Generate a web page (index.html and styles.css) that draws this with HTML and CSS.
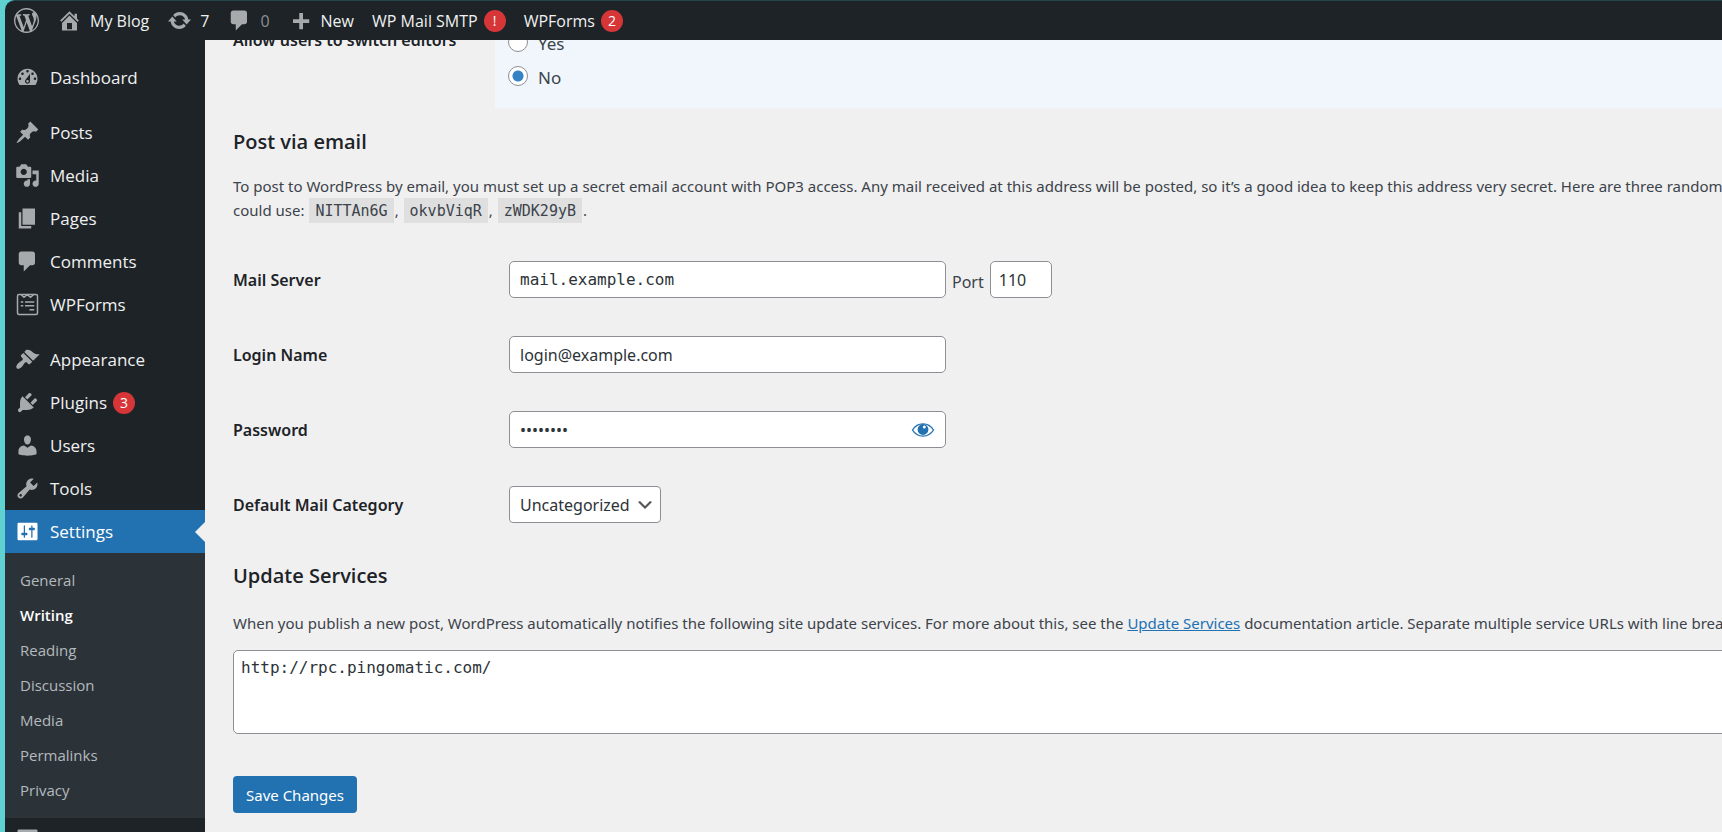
FILE: index.html
```html
<!DOCTYPE html>
<html lang="en">
<head>
<meta charset="utf-8">
<meta name="viewport" content="width=device-width, initial-scale=1">
<title>Writing Settings ‹ My Blog — WordPress</title>
<link rel="stylesheet" href="styles.css">
</head>
<body>
<div class="window">
  <header class="adminbar">
    <a class="bar-item bar-logo" href="#" aria-label="About WordPress"><svg class="icon" viewBox="0 0 20 20"><path d="M20 10c0-5.51-4.49-10-10-10C4.48 0 0 4.49 0 10c0 5.52 4.48 10 10 10 5.51 0 10-4.48 10-10zM7.78 15.37L4.37 6.22c.55-.02 1.17-.08 1.17-.08.5-.06.44-1.13-.06-1.11 0 0-1.45.11-2.37.11-.18 0-.37 0-.58-.01C4.12 2.69 6.87 1.11 10 1.11c2.33 0 4.45.87 6.05 2.34-.68-.11-1.65.39-1.65 1.58 0 .74.45 1.36.9 2.1.35.61.55 1.36.55 2.46 0 1.49-1.4 5-1.4 5l-3.03-8.37c.54-.02.82-.17.82-.17.5-.05.44-1.25-.06-1.22 0 0-1.44.12-2.38.12-.87 0-2.33-.12-2.33-.12-.5-.03-.56 1.2-.06 1.22l.92.08 1.26 3.41zM17.41 10c.24-.64.74-1.87.43-4.25.7 1.29 1.05 2.71 1.05 4.25 0 3.29-1.73 6.24-4.4 7.78.97-2.59 1.94-5.2 2.92-7.78zM6.1 18.09C3.12 16.65 1.11 13.53 1.11 10c0-1.3.23-2.48.72-3.59C3.25 10.3 4.67 14.2 6.1 18.09zm4.03-6.63l2.58 6.98c-.86.29-1.76.45-2.71.45-.79 0-1.57-.11-2.29-.33.81-2.38 1.62-4.74 2.42-7.1z"/></svg></a>
    <a class="bar-item" href="#"><svg class="icon" viewBox="0 0 20 20"><path d="M16 8.5l1.53 1.53-1.06 1.06L10 4.6l-6.47 6.49-1.06-1.06L10 2.5l4 4v-2h2v4zm-6-2.46l6 5.99V18H4v-5.97zM12 17v-5H8v5h4z"/></svg>My Blog</a>
    <a class="bar-item" href="#"><svg class="icon" viewBox="0 0 20 20"><path d="M10.2 3.28c3.53 0 6.43 2.61 6.92 6h2.08l-3.5 4-3.5-4h2.32c-.45-1.97-2.21-3.45-4.32-3.45-1.45 0-2.73.71-3.54 1.78L4.95 5.66C6.23 4.2 8.11 3.28 10.2 3.28zm-.4 13.44c-3.52 0-6.43-2.61-6.92-6H.8l3.5-4c1.17 1.33 2.33 2.67 3.5 4H5.48c.45 1.97 2.21 3.45 4.32 3.45 1.45 0 2.73-.71 3.54-1.78l1.71 1.95c-1.28 1.46-3.15 2.38-5.25 2.38z"/></svg>7</a>
    <a class="bar-item" href="#"><svg class="icon" viewBox="0 0 20 20"><path d="M5 2h9c1.1 0 2 .9 2 2v7c0 1.1-.9 2-2 2h-2l-5 5v-5H5c-1.1 0-2-.9-2-2V4c0-1.1.9-2 2-2z"/></svg><span class="zero">0</span></a>
    <a class="bar-item" href="#"><svg class="icon" viewBox="0 0 20 20"><path d="M17 9v3h-5v5H9v-5H4V9h5V4h3v5h5z"/></svg>New</a>
    <a class="bar-item" href="#">WP Mail SMTP<span class="badge">!</span></a>
    <a class="bar-item" href="#">WPForms<span class="badge">2</span></a>
  </header>

  <div class="columns">
    <nav class="menu" aria-label="Main menu">
      <ul class="menu-group">
        <li><a class="menu-item" href="#"><svg class="icon" viewBox="0 0 20 20"><path fill-rule="evenodd" d="M3.76 16h12.48c1.1-1.37 1.76-3.11 1.76-5 0-4.42-3.58-8-8-8s-8 3.58-8 8c0 1.89.66 3.63 1.76 5zM10 4c.55 0 1 .45 1 1s-.45 1-1 1-1-.45-1-1 .45-1 1-1zM6 6c.55 0 1 .45 1 1s-.45 1-1 1-1-.45-1-1 .45-1 1-1zm8 0c.55 0 1 .45 1 1s-.45 1-1 1-1-.45-1-1 .45-1 1-1zm-5.37 5.55L12 7v6c0 1.1-.9 2-2 2s-2-.9-2-2c0-.57.24-1.08.63-1.45zM4 10c.55 0 1 .45 1 1s-.45 1-1 1-1-.45-1-1 .45-1 1-1zm12 0c.55 0 1 .45 1 1s-.45 1-1 1-1-.45-1-1 .45-1 1-1zm-5 3c0-.55-.45-1-1-1s-1 .45-1 1 .45 1 1 1 1-.45 1-1z"/></svg>Dashboard</a></li>
      </ul>
      <ul class="menu-group">
        <li><a class="menu-item" href="#"><svg class="icon" viewBox="0 0 20 20"><path d="M10.44 3.02l1.82-1.82 6.36 6.35-1.83 1.82c-1.05-.68-2.48-.57-3.41.36l-.75.75c-.92.93-1.04 2.35-.35 3.41l-1.83 1.82-2.41-2.41-2.8 2.79c-.42.42-3.38 2.71-3.8 2.29s1.86-3.39 2.28-3.81l2.79-2.79L4.1 9.36l1.83-1.82c1.05.69 2.48.57 3.4-.36l.75-.75c.93-.92 1.05-2.35.36-3.41z"/></svg>Posts</a></li>
        <li><a class="menu-item" href="#"><svg class="icon" viewBox="0 0 20 20"><path fill-rule="evenodd" d="M13 11V4c0-.55-.45-1-1-1h-1.67L9 1H5L3.67 3H2c-.55 0-1 .45-1 1v7c0 .55.45 1 1 1h10c.55 0 1-.45 1-1zM7 4.5c1.38 0 2.5 1.12 2.5 2.5S8.38 9.5 7 9.5 4.5 8.38 4.5 7 5.62 4.5 7 4.5zM14 6h5v10.5c0 1.38-1.12 2.5-2.5 2.5S14 17.88 14 16.5s1.12-2.5 2.5-2.5c.17 0 .34.02.5.05V9h-3V6zm-4 8.05V13h2v3.5c0 1.38-1.12 2.5-2.5 2.5S7 17.88 7 16.5 8.12 14 9.5 14c.17 0 .34.02.5.05z"/></svg>Media</a></li>
        <li><a class="menu-item" href="#"><svg class="icon" viewBox="0 0 20 20"><path d="M6 15V2h10v13H6zm-1 1h8v2H3V5h2v11z"/></svg>Pages</a></li>
        <li><a class="menu-item" href="#"><svg class="icon" viewBox="0 0 20 20"><path d="M5 2h9c1.1 0 2 .9 2 2v7c0 1.1-.9 2-2 2h-2l-5 5v-5H5c-1.1 0-2-.9-2-2V4c0-1.1.9-2 2-2z"/></svg>Comments</a></li>
        <li><a class="menu-item" href="#"><svg class="icon icon-line" viewBox="0 0 20 20"><rect x="2" y="2" width="16" height="16" rx="1.2"/><path d="M5 2.2l2.2 2 2.6-2 2.6 2 2.4-2M4.6 8h2M8 8h7.4M4.6 11h2M8 11h7.4M11.6 14.2h3.8"/></svg>WPForms</a></li>
      </ul>
      <ul class="menu-group">
        <li><a class="menu-item" href="#"><svg class="icon" viewBox="0 0 20 20"><path d="M14.48 11.06L7.41 3.99l1.5-1.5c.5-.56 2.3-.47 3.51.32 1.21.8 1.43 1.28 2.91 2.1 1.18.64 2.45 1.26 4.45.85zm-.71.71L6.7 4.7 4.93 6.47c-.39.39-.39 1.02 0 1.41l1.06 1.06c.39.39.39 1.03 0 1.42-.6.6-1.43 1.11-2.21 1.69-.35.26-.7.53-1.01.84C1.43 14.23.4 16.08 1.4 17.07c.99 1 2.84-.03 4.18-1.36.31-.31.58-.66.85-1.02.57-.78 1.08-1.61 1.69-2.21.39-.39 1.02-.39 1.41 0l1.06 1.06c.39.39 1.02.39 1.41 0z"/></svg>Appearance</a></li>
        <li><a class="menu-item" href="#"><svg class="icon" viewBox="0 0 20 20"><path d="M13.11 4.36L9.87 7.6 8 5.73l3.24-3.24c.35-.34 1.05-.2 1.56.32.52.51.66 1.21.31 1.55zm-8 1.77l.91-1.12 9.01 9.01-1.19.84c-.71.71-2.63 1.16-3.82 1.16H6.14L4.9 17.26c-.59.59-1.54.59-2.12 0-.59-.58-.59-1.53 0-2.12l1.24-1.24v-3.88c0-1.13.4-3.19 1.09-3.89zm7.26 3.97l3.24-3.24c.34-.35 1.04-.21 1.55.31.52.51.66 1.21.31 1.55l-3.24 3.25z"/></svg>Plugins<span class="badge">3</span></a></li>
        <li><a class="menu-item" href="#"><svg class="icon" viewBox="0 0 20 20"><path d="M10 9.25c-2.27 0-2.73-3.44-2.73-3.44C7 4.02 7.82 2 9.97 2c2.16 0 2.98 2.02 2.71 3.81 0 0-.41 3.44-2.68 3.44zm0 2.57L12.72 10c2.39 0 4.52 2.33 4.52 4.53v2.49s-3.65 1.13-7.24 1.13c-3.65 0-7.24-1.13-7.24-1.13v-2.49c0-2.25 1.94-4.48 4.47-4.48z"/></svg>Users</a></li>
        <li><a class="menu-item" href="#"><svg class="icon" viewBox="0 0 20 20"><path d="M16.68 9.77c-1.34 1.34-3.3 1.67-4.95.99l-5.41 6.52c-.99.99-2.59.99-3.58 0s-.99-2.59 0-3.57l6.52-5.42c-.68-1.65-.35-3.61.99-4.95 1.28-1.28 3.12-1.62 4.72-1.06l-2.89 2.89 2.82 2.82 2.86-2.87c.53 1.58.18 3.39-1.08 4.65zM3.81 16.21c.4.39 1.04.39 1.43 0 .4-.4.4-1.04 0-1.43-.39-.4-1.03-.4-1.43 0-.39.39-.39 1.03 0 1.43z"/></svg>Tools</a></li>
        <li>
          <a class="menu-item current" href="#"><svg class="icon" viewBox="0 0 20 20"><path d="M18 16V4c0-.55-.45-1-1-1H3c-.55 0-1 .45-1 1v12c0 .55.45 1 1 1h14c.55 0 1-.45 1-1zM8 11h1c.55 0 1 .45 1 1s-.45 1-1 1H8v1.5c0 .28-.22.5-.5.5s-.5-.22-.5-.5V13H6c-.55 0-1-.45-1-1s.45-1 1-1h1V5.500c0-.28.22-.5.5-.5s.5.22.5.5V11zm5-2h-1c-.55 0-1-.45-1-1s.45-1 1-1h1V5.500c0-.28.22-.5.5-.5s.5.22.5.5V7h1c.55 0 1 .45 1 1s-.45 1-1 1h-1v5.500c0 .28-.22.5-.5.5s-.5-.22-.5-.5V9z"/></svg>Settings</a>
          <ul class="submenu">
            <li><a href="#">General</a></li>
            <li><a class="active" href="#">Writing</a></li>
            <li><a href="#">Reading</a></li>
            <li><a href="#">Discussion</a></li>
            <li><a href="#">Media</a></li>
            <li><a href="#">Permalinks</a></li>
            <li><a href="#">Privacy</a></li>
          </ul>
        </li>
        <li><a class="menu-item" href="#" aria-label="WP Mail SMTP"><svg class="icon" viewBox="0 0 20 20"><rect x="2" y="2" width="16" height="15" rx="1"/></svg></a></li>
      </ul>
    </nav>

    <main class="content">
      <form class="wide">
        <div class="row editors" role="radiogroup" aria-labelledby="editors-label">
          <span class="label editors-label" id="editors-label">Allow users to switch editors</span>
          <div class="choices">
            <label class="choice"><input type="radio" name="switch"><span>Yes</span></label>
            <label class="choice"><input type="radio" name="switch" checked><span>No</span></label>
          </div>
        </div>

        <h2>Post via email</h2>
        <p>To post to WordPress by email, you must set up a secret email account with POP3 access. Any mail received at this address will be posted, so it’s a good idea to keep this address very secret. Here are three random strings you<br>could use: <code>NITTAn6G</code>, <code>okvbViqR</code>, <code>zWDK29yB</code>.</p>

        <div class="fields">
          <div class="row">
            <label class="label" for="server">Mail Server</label>
            <div class="cell"><input class="field mono" id="server" type="text" value="mail.example.com"><label class="port-label" for="port">Port</label><input class="field port" id="port" type="text" value="110"></div>
          </div>
          <div class="row">
            <label class="label" for="login">Login Name</label>
            <div class="cell"><input class="field" id="login" type="text" value="login@example.com"></div>
          </div>
          <div class="row">
            <label class="label" for="pass">Password</label>
            <div class="cell"><div class="password"><input class="field" id="pass" type="password" value="password"><button class="reveal" type="button" aria-label="Show password"><svg viewBox="0 0 24 16"><path class="lid" d="M1.500 8C6.500-.2 17.500-.2 22.500 8 17.500 16.200 6.500 16.200 1.500 8z"/><circle cx="12" cy="7.500" r="5.400"/><circle class="glint" cx="13.300" cy="5" r="1.500"/></svg></button></div></div>
          </div>
          <div class="row">
            <label class="label" for="category">Default Mail Category</label>
            <div class="cell"><div class="select"><select id="category"><option>Uncategorized</option></select><svg class="chevron" viewBox="0 0 20 20"><path d="M5 6l5 5 5-5 2 1-7 7-7-7 2-1z"/></svg></div></div>
          </div>
        </div>

        <h2>Update Services</h2>
        <p class="note"><label for="ping">When you publish a new post, WordPress automatically notifies the following site update services. For more about this, see the <a href="#">Update Services</a> documentation article. Separate multiple service URLs with line breaks.</label></p>
        <textarea id="ping" rows="3">http://rpc.pingomatic.com/</textarea>
        <button class="save" type="submit">Save Changes</button>
      </form>
    </main>
  </div>
</div>
</body>
</html>
```

FILE: styles.css
```css
*,
*::before,
*::after {
  box-sizing: border-box;
}

body {
  margin: 0;
  height: 100vh;
  overflow: hidden;
  background: #5fd1d1;
  color: #3c434a;
  font-family: "Open Sans", "Noto Sans", sans-serif;
  font-size: 15px;
  line-height: 24px;
}

ul {
  list-style: none;
  margin: 0;
  padding: 0;
}

a {
  color: #2271b1;
}

input,
select,
textarea,
button {
  margin: 0;
  font: inherit;
  color: inherit;
}

.window {
  display: flex;
  flex-direction: column;
  height: 100%;
  margin-left: 5px;
  overflow: hidden;
  background: #1d2327;
  border-top: 1px solid #25434a;
  border-top-left-radius: 10px;
}

.icon {
  flex: none;
  width: 25px;
  height: 25px;
  fill: #a7aaad;
}

.icon-line {
  fill: none;
  stroke: #a7aaad;
  stroke-width: 1.2;
}

.badge {
  display: flex;
  align-items: center;
  justify-content: center;
  width: 22px;
  height: 22px;
  margin-left: 6px;
  border-radius: 50%;
  background: #d63638;
  color: #fff;
  font-size: 14px;
}

/* Toolbar */

.adminbar {
  display: flex;
  flex: none;
  align-items: center;
  gap: 18px;
  height: 39px;
  padding-left: 9px;
}

.bar-item {
  display: flex;
  align-items: center;
  color: #f0f0f1;
  font-size: 16px;
  text-decoration: none;
  white-space: nowrap;
}

.bar-item .icon {
  margin-right: 8px;
}

.bar-logo .icon {
  margin-right: 0;
}

.zero {
  color: #8c8f94;
}

/* Sidebar */

.columns {
  display: flex;
  flex: 1;
  min-height: 0;
}

.menu {
  flex: none;
  width: 200px;
  padding-top: 16px;
}

.menu-group + .menu-group {
  margin-top: 12px;
}

.menu-item {
  display: flex;
  align-items: center;
  height: 43px;
  padding-left: 10px;
  color: #f0f0f1;
  font-size: 17px;
  text-decoration: none;
}

.menu-item .icon {
  margin-right: 10px;
}

.current {
  position: relative;
  background: #2271b1;
  color: #fff;
}

.current .icon {
  fill: #fff;
}

.current::after {
  content: "";
  position: absolute;
  top: 50%;
  right: 0;
  margin-top: -10px;
  border: 10px solid transparent;
  border-left-width: 0;
  border-right-color: #f0f0f1;
}

.submenu {
  padding: 10px 0;
  background: #2c3338;
}

.submenu a {
  display: block;
  padding-left: 15px;
  color: #b4b9be;
  line-height: 35px;
  text-decoration: none;
}

.submenu .active {
  color: #fff;
  font-weight: 600;
}

/* Settings form */

.content {
  flex: 1;
  min-width: 0;
  overflow: hidden;
  background: #f0f0f1;
  font-family: "Noto Sans", "Open Sans", sans-serif;
}

/* The form runs past the window's right edge. */
.wide {
  margin-right: -240px;
  padding-left: 28px;
}

.row {
  display: flex;
}

.label {
  flex: none;
  width: 276px;
  color: #1d2327;
  font-size: 16px;
  font-weight: 600;
}

.editors {
  margin-top: -20px;
}

.editors-label {
  width: 262px;
  padding-top: 8px;
}

.choices {
  flex: 1;
  padding: 5px 13px 15px;
  background: #f0f6fc;
}

.choice {
  display: flex;
  align-items: center;
  gap: 10px;
  height: 34px;
  font-size: 17px;
}

.choice span {
  padding-top: 3px;
}

.choice input {
  appearance: none;
  width: 20px;
  height: 20px;
  border: 1px solid #8c8f94;
  border-radius: 50%;
  background: #fff;
}

.choice input:checked {
  background: radial-gradient(circle, #3582c4 5px, #fff 6px);
}

h2 {
  margin: 0;
  padding: 20px 0 18px;
  color: #1d2327;
  font-family: "Open Sans", "Noto Sans", sans-serif;
  font-size: 20px;
  font-weight: 600;
  line-height: 28px;
}

p {
  margin: 0;
  white-space: nowrap;
}

code {
  margin: 0 1px;
  padding: 4px 6px 3px;
  background: #dfdfe0;
  font-family: "DejaVu Sans Mono", monospace;
  font-size: 15px;
}

.fields {
  display: grid;
  gap: 38px;
  padding: 38px 0 19px;
}

.fields .row {
  align-items: center;
}

.cell {
  display: flex;
  align-items: center;
}

.field {
  width: 437px;
  height: 37px;
  padding: 0 10px;
  border: 1px solid #8c8f94;
  border-radius: 5px;
  background: #fff;
  color: #2c3338;
  font-size: 16px;
}

.mono,
textarea {
  font-family: "DejaVu Sans Mono", monospace;
}

.port-label {
  margin: 0 6px;
  padding-top: 4px;
  font-size: 16px;
}

.port {
  width: 62px;
  padding: 0 8px;
}

.password,
.select {
  position: relative;
}

.reveal {
  position: absolute;
  top: 0;
  right: 0;
  display: flex;
  align-items: center;
  justify-content: center;
  width: 46px;
  height: 37px;
  padding: 0;
  border: 0;
  background: none;
}

.reveal svg {
  width: 24px;
  height: 16px;
  fill: #2271b1;
}

.reveal .lid {
  fill: none;
  stroke: #2271b1;
  stroke-width: 1.4;
}

.reveal .glint {
  fill: #fff;
}

select {
  appearance: none;
  height: 37px;
  padding: 0 30px 0 10px;
  border: 1px solid #8c8f94;
  border-radius: 4px;
  background: #fff;
  color: #2c3338;
  font-size: 16px;
}

.chevron {
  position: absolute;
  top: 9px;
  right: 6px;
  width: 20px;
  height: 20px;
  fill: #555;
  pointer-events: none;
}

.note {
  padding-top: 3px;
}

textarea {
  display: block;
  width: 100%;
  height: 84px;
  margin-top: 15px;
  padding: 5px 7px;
  border: 1px solid #8c8f94;
  border-radius: 5px;
  background: #fff;
  color: #2c3338;
  font-size: 16px;
  resize: none;
}

.save {
  height: 37px;
  margin-top: 42px;
  padding: 0 13px;
  border: 0;
  border-radius: 4px;
  background: #2271b1;
  color: #fff;
  font-size: 15px;
}
```
